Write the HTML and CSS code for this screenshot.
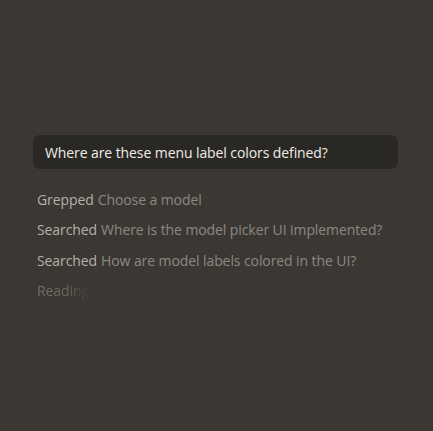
FILE: index.html
```html
<!DOCTYPE html>
<html>
<head>
<meta charset="utf-8">
<link rel="stylesheet" href="styles.css">
</head>
<body>
<div class="page">
  <div class="query">Where are these menu label colors defined?</div>
  <div class="steps">
    <div class="step"><span class="verb">Grepped</span> <span class="detail">Choose a model</span></div>
    <div class="step"><span class="verb">Searched</span> <span class="detail">Where is the model picker UI implemented?</span></div>
    <div class="step"><span class="verb">Searched</span> <span class="detail">How are model labels colored in the UI?</span></div>
    <div class="step"><span class="reading">Reading</span></div>
  </div>
</div>
</body>
</html>
```
FILE: styles.css
```css
html, body {
  margin: 0;
  padding: 0;
  background: #3b3833;
  height: 100%;
}
.page {
  padding: 135px 35px 0 33px;
  font-family: "Open Sans", "Noto Sans", sans-serif;
  font-size: 14px;
  letter-spacing: -0.09px;
}
.query {
  background: #2a2824;
  border-radius: 7px;
  height: 34px;
  box-sizing: border-box;
  padding: 0 12px;
  display: flex;
  align-items: center;
  color: #eeece8;
}
.steps {
  padding: 15px 0 0 4px;
  display: flex;
  flex-direction: column;
}
.step {
  height: 30.5px;
  display: flex;
  align-items: center;
  gap: 4px;
  white-space: nowrap;
}
.verb { color: #b3b0ab; }
.detail { color: #8b8883; }
.reading {
  background: linear-gradient(90deg, #75726c 0%, #6a675f 60%, #3b3833 100%);
  -webkit-background-clip: text;
  background-clip: text;
  color: transparent;
}
```
